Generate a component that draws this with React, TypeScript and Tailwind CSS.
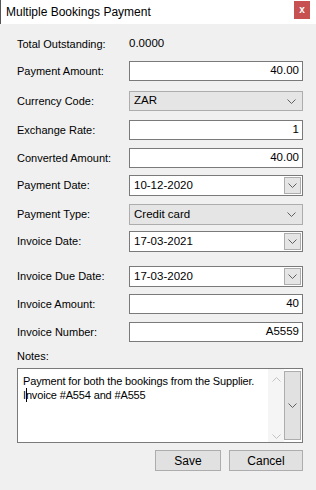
import React from "react";

const font = { fontFamily: '"Liberation Sans", Arial, sans-serif' };

function Chevron({ color = "#606060" }: { color?: string }) {
  return (
    <svg width="9" height="5" viewBox="0 0 9 5" className="block">
      <polyline points="0.5,0.5 4.5,4.5 8.5,0.5" fill="none" stroke={color} strokeWidth="1" />
    </svg>
  );
}

function Row({ label, h, mt, children }: { label: string; h: number; mt: number; children: React.ReactNode }) {
  return (
    <div className="flex items-center" style={{ marginTop: mt, height: h }}>
      <div className="w-[112px] text-[11px] text-black leading-none">{label}</div>
      <div className="w-[174px] h-full">{children}</div>
    </div>
  );
}

function TextBox({ value }: { value: string }) {
  return (
    <div className="h-full border border-[#7a7a7a] bg-white flex items-center justify-end pr-[3px] text-[11.5px] text-black">
      {value}
    </div>
  );
}

function Combo({ value }: { value: string }) {
  return (
    <div className="h-full border border-[#adadad] bg-[#e5e5e5] flex items-center justify-between pl-[4px] pr-[6px] text-[11.5px] text-black">
      <span>{value}</span>
      <Chevron />
    </div>
  );
}

function DateBox({ value }: { value: string }) {
  return (
    <div className="h-full border border-[#7a7a7a] bg-white flex items-center justify-between pl-[4px] pr-[1px] text-[11.5px] text-black">
      <span>{value}</span>
      <div className="w-[17px] h-[17px] border border-[#adadad] bg-[#e5e5e5] flex items-center justify-center">
        <Chevron />
      </div>
    </div>
  );
}

export default function App() {
  return (
    <div className="w-[316px] h-[490px] bg-[#f0f0f0] flex flex-col" style={font}>
      <div className="h-[24px] bg-white flex items-center justify-between pl-[5px] pr-[6px] border-l border-[#555]">
        <span className="text-[12px] text-black">Multiple Bookings Payment</span>
        <div className="w-[16px] h-[18px] bg-[#c75050] flex items-center justify-center text-white text-[10px] font-bold leading-none mb-[4px]">
          x
        </div>
      </div>
      <div className="pl-[17px] flex flex-col">
        <div className="flex items-center h-[14px] mt-[13px] text-[11px] text-black">
          <div className="w-[112px]">Total Outstanding:</div>
          <div className="text-[11.5px]">0.0000</div>
        </div>
        <Row label="Payment Amount:" h={20} mt={10}>
          <TextBox value="40.00" />
        </Row>
        <Row label="Currency Code:" h={20} mt={10}>
          <Combo value="ZAR" />
        </Row>
        <Row label="Exchange Rate:" h={20} mt={9}>
          <TextBox value="1" />
        </Row>
        <Row label="Converted Amount:" h={20} mt={8}>
          <TextBox value="40.00" />
        </Row>
        <Row label="Payment Date:" h={21} mt={7}>
          <DateBox value="10-12-2020" />
        </Row>
        <Row label="Payment Type:" h={21} mt={8}>
          <Combo value="Credit card" />
        </Row>
        <Row label="Invoice Date:" h={21} mt={6}>
          <DateBox value="17-03-2021" />
        </Row>
        <Row label="Invoice Due Date:" h={21} mt={14}>
          <DateBox value="17-03-2020" />
        </Row>
        <Row label="Invoice Amount:" h={20} mt={7}>
          <TextBox value="40" />
        </Row>
        <Row label="Invoice Number:" h={20} mt={8}>
          <TextBox value="A5559" />
        </Row>
        <div className="mt-[7px] text-[11px] text-black leading-[14px]">Notes:</div>
        <div className="mt-[5px] w-[286px] h-[75px] border border-[#7a7a7a] bg-white flex">
          <div className="flex-1 pl-[5px] pt-[5px] text-[11px] tracking-[-0.15px] leading-[14px] text-black whitespace-nowrap">
            <div>Payment for both the bookings from the Supplier.</div>
            <div className="relative">
              Invoice #A554 and #A555
              <span className="absolute left-[3px] top-0 w-px h-[14px] bg-black" />
            </div>
          </div>
          <div className="w-[16px] bg-[#f5f5f5] flex flex-col items-center justify-between pt-[8px] pb-[3px]">
            <svg width="9" height="5" viewBox="0 0 9 5"><polyline points="0.5,4.5 4.5,0.5 8.5,4.5" fill="none" stroke="#c2c2c2" /></svg>
            <Chevron color="#c2c2c2" />
          </div>
          <div className="w-[17px] my-[2px] mr-[1px] border border-[#adadad] bg-[#e1e1e1] flex items-center justify-center">
            <Chevron />
          </div>
        </div>
        <div className="mt-[7px] flex justify-end gap-[8px] w-[286px]">
          <div className="w-[66px] h-[21px] border border-[#adadad] bg-[#e1e1e1] flex items-center justify-center text-[12px] text-black">Save</div>
          <div className="w-[74px] h-[21px] border border-[#adadad] bg-[#e1e1e1] flex items-center justify-center text-[12px] text-black">Cancel</div>
        </div>
      </div>
    </div>
  );
}
